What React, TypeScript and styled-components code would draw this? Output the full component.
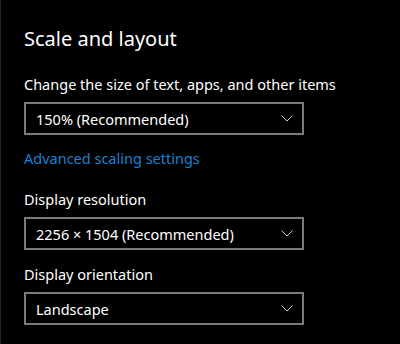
import React from 'react';
import styled, { createGlobalStyle } from 'styled-components';

const GlobalStyle = createGlobalStyle`
  html, body {
    margin: 0;
    padding: 0;
    background: #000;
  }
  body {
    font-family: "Noto Sans", "Open Sans", sans-serif;
    color: #fff;
  }
`;

const Page = styled.div`
  width: 400px;
  height: 344px;
  box-sizing: border-box;
  border-left: 1px solid #1c212b;
  padding: 25px 0 0 23px;
  overflow: hidden;
`;

const Title = styled.h2`
  margin: 0 0 21px;
  font-size: 20px;
  font-weight: 400;
  line-height: 28px;
`;

const Label = styled.div`
  font-size: 14.5px;
  line-height: 20px;
  margin-bottom: 8px;
`;

const Field = styled.div<{ $gapAfter: number }>`
  margin-bottom: ${p => p.$gapAfter}px;
`;

const Select = styled.div`
  width: 280px;
  height: 33px;
  box-sizing: border-box;
  border: 2px solid #7a7a7a;
  background: #000;
  display: flex;
  align-items: center;
  justify-content: space-between;
  padding: 0 9px 0 10px;
  font-size: 14.5px;
  cursor: pointer;
`;

const Chevron = styled.svg`
  width: 12px;
  height: 7px;
  flex: none;
`;

const Link = styled.a`
  display: block;
  color: #1a80d4;
  font-size: 14.5px;
  line-height: 20px;
  text-decoration: none;
  margin-bottom: 21px;
`;

const Dropdown: React.FC<{ value: string }> = ({ value }) => (
  <Select>
    <span>{value}</span>
    <Chevron viewBox="0 0 12 7">
      <path d="M0.5 0.5 L6 6 L11.5 0.5" fill="none" stroke="#cfcfcf" strokeWidth="1" />
    </Chevron>
  </Select>
);

export default function App() {
  return (
    <>
      <GlobalStyle />
      <Page>
        <Title>Scale and layout</Title>
        <Field $gapAfter={13}>
          <Label>Change the size of text, apps, and other items</Label>
          <Dropdown value="150% (Recommended)" />
        </Field>
        <Link href="#">Advanced scaling settings</Link>
        <Field $gapAfter={14}>
          <Label>Display resolution</Label>
          <Dropdown value="2256 × 1504 (Recommended)" />
        </Field>
        <Field $gapAfter={0}>
          <Label>Display orientation</Label>
          <Dropdown value="Landscape" />
        </Field>
      </Page>
    </>
  );
}
